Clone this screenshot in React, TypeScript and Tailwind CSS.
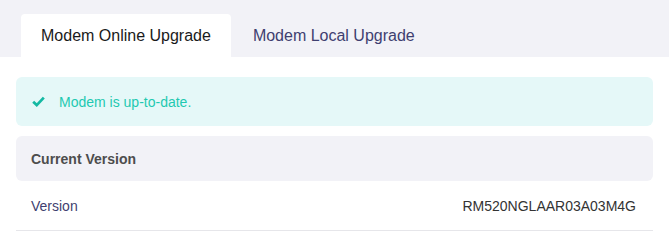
import React, { useState } from 'react';

const tabs = ['Modem Online Upgrade', 'Modem Local Upgrade'];

export default function App() {
  const [active, setActive] = useState(0);

  return (
    <div className="min-h-screen bg-white font-['Liberation_Sans',Arial,sans-serif]">
      <div className="flex h-[57px] items-end gap-[2px] bg-[#f2f2f7] pl-[21px]">
        {tabs.map((t, i) => (
          <button
            key={t}
            onClick={() => setActive(i)}
            className={`flex h-[43px] items-center rounded-t-[4px] px-5 text-base ${
              active === i ? 'bg-white text-[#1a1a1a]' : 'text-[#3f3f70]'
            }`}
          >
            {t}
          </button>
        ))}
      </div>

      <div className="px-4 pt-5">
        <div className="flex h-[49px] items-center rounded-[6px] bg-[#e5f8f8] pl-4 text-sm text-[#1fc9b1]">
          <svg viewBox="0 0 14 12" className="h-[11px] w-[13px]" fill="none">
            <path
              d="M1.2 6.2l3.9 3.7L12.8 1.8"
              stroke="#14b9a3"
              strokeWidth="3"
              strokeLinecap="butt"
              strokeLinejoin="miter"
            />
          </svg>
          <span className="ml-[14px]">Modem is up-to-date.</span>
        </div>

        <div className="mt-[10px] flex h-[45px] items-center rounded-[6px] bg-[#f2f2f7] px-[15px] text-sm font-bold text-[#4d4d4d]">
          Current Version
        </div>

        <div className="flex h-[50px] items-center justify-between border-b border-[#e6e6ea] pl-[15px] pr-[17px] text-sm">
          <span className="text-[#3f3f70]">Version</span>
          <span className="text-[#333333]">RM520NGLAAR03A03M4G</span>
        </div>
      </div>
    </div>
  );
}
